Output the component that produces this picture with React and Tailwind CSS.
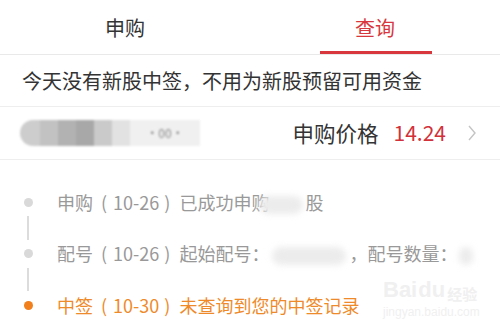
import React from 'react'

const font = { fontFamily: '"Noto Sans CJK SC", "Noto Sans", sans-serif' }

const Blur = ({ w, className = '' }) => (
  <span
    className={`inline-block h-[18px] align-middle rounded-full bg-[#ececec] blur-[3px] ${className}`}
    style={{ width: w }}
  />
)

// date in round brackets, spaced like the app's font
const DateTag = ({ d }) => (
  <>
    <span className="ml-[8px] mr-[6px]">(</span>
    {d}
    <span className="ml-[5px] mr-[9px]">)</span>
  </>
)

const steps = [
  {
    key: 1,
    active: false,
    content: (
      <>
        申购<DateTag d="10-26" />已成功申购
        <Blur w={44} className="-ml-[10px] mr-[2px]" />
        股
      </>
    )
  },
  {
    key: 2,
    active: false,
    content: (
      <>
        配号<DateTag d="10-26" />起始配号：
        <Blur w={74} className="mx-[3px]" />
        ，配号数量：
        <Blur w={14} className="ml-[2px]" />
      </>
    )
  },
  {
    key: 3,
    active: true,
    content: <>中签<DateTag d="10-30" />未查询到您的中签记录</>
  }
]

export default function App() {
  return (
    <div className="relative w-[500px] h-[332px] overflow-hidden bg-white" style={font}>
      {/* Tabs */}
      <div className="flex h-[55px] border-b border-[#e9e9e9]">
        <div className="flex-1 flex items-center justify-center text-[20px] text-[#333] pt-[2px]">
          申购
        </div>
        <div className="relative flex-1 flex items-center justify-center text-[20px] text-[#d8383d] pt-[2px]">
          查询
          <div className="absolute bottom-0 left-[70px] w-[112px] h-[3px] bg-[#d8383d]" />
        </div>
      </div>

      {/* Notice */}
      <div className="flex h-[52px] items-center px-[22px] text-[20px] text-[#333] border-b border-[#eeeeee]">
        今天没有新股中签，不用为新股预留可用资金
      </div>

      {/* Price row */}
      <div className="flex h-[53px] items-center pl-[20px] pr-[24px] border-b border-[#eeeeee]">
        <div className="flex items-center h-[28px] w-[180px] blur-[1px]">
          <div className="h-[26px] w-[20px] rounded-l-full bg-[#cdcdcd]" />
          <div className="h-[26px] w-[18px] bg-[#c2c2c2]" />
          <div className="h-[26px] w-[18px] bg-[#b2b2b2]" />
          <div className="h-[26px] w-[18px] bg-[#a8a8a8]" />
          <div className="h-[26px] w-[18px] bg-[#cacaca]" />
          <div className="h-[26px] w-[18px] bg-[#e2e2e2]" />
          <div className="flex h-[26px] w-[70px] items-center justify-center bg-[#f0f0f0] text-[12px] text-[#888]">
            ·00·
          </div>
        </div>
        <div className="ml-auto flex items-center">
          <span className="text-[21.5px] text-[#333]">申购价格</span>
          <span className="ml-[15px] text-[21px] text-[#d2313a]">14.24</span>
          <svg className="ml-[22px]" width="8" height="16" viewBox="0 0 8 16" fill="none">
            <polyline points="1,1 7,8 1,15" stroke="#c4c4c4" strokeWidth="1.4" />
          </svg>
        </div>
      </div>

      {/* Timeline */}
      <div className="flex flex-col pt-[30px]">
        {steps.map((s, i) => (
          <div key={s.key} className="flex flex-col">
            <div className="flex h-[24px] items-center">
              <div className="flex w-[57px] justify-center pr-[1px]">
                <div className={`w-[9px] h-[9px] rounded-full ${s.active ? 'bg-[#f07f1c]' : 'bg-[#d9d9d9]'}`} />
              </div>
              <div className={`whitespace-nowrap text-[18px] ${s.active ? 'text-[#ef8a2a]' : 'text-[#999]'}`}>
                {s.content}
              </div>
            </div>
            {i < steps.length - 1 && (
              <div className="flex h-[27.5px] w-[57px] justify-center pr-[1px] py-[2px]">
                <div className="w-[2px] h-full bg-[#dcdcdc]" />
              </div>
            )}
          </div>
        ))}
      </div>

      {/* Watermark */}
      <div className="absolute left-[383px] top-[279px] flex flex-col items-start text-[#f0f0f0] pointer-events-none" style={{ fontFamily: '"Liberation Sans", sans-serif' }}>
        <div className="flex items-end text-[22px] font-bold leading-none">
          <span>Bai</span>
          <span className="ml-[1px]">du</span>
          <span className="ml-[2px] text-[15px]" style={font}>经验</span>
        </div>
        <div className="mt-[5px] text-[12px] leading-none">jingyan.baidu.com</div>
      </div>
    </div>
  )
}
